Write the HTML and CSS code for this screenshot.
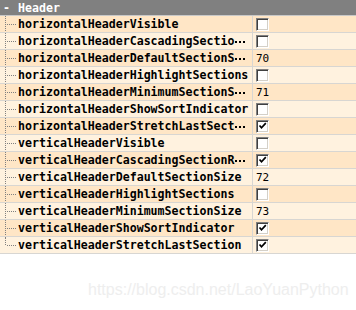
FILE: index.html
```html
<!DOCTYPE html>
<html>
<head>
<meta charset="utf-8">
<link rel="stylesheet" href="styles.css">
</head>
<body>
<div class="table">
  <div class="head"><span class="minus">-</span><span class="htext">Header</span></div>
  <div class="row a"><div class="name"><span class="tree"></span><span class="lbl">horizontalHeaderVisible</span></div><div class="val"><span class="cb"></span></div></div>
  <div class="row b"><div class="name"><span class="tree"></span><span class="lbl">horizontalHeaderCascadingSectio</span><span class="ell" title="…"></span></div><div class="val"><span class="cb"></span></div></div>
  <div class="row a"><div class="name"><span class="tree"></span><span class="lbl">horizontalHeaderDefaultSectionS</span><span class="ell"></span></div><div class="val"><span class="num">70</span></div></div>
  <div class="row b"><div class="name"><span class="tree"></span><span class="lbl">horizontalHeaderHighlightSections</span></div><div class="val"><span class="cb"></span></div></div>
  <div class="row a"><div class="name"><span class="tree"></span><span class="lbl">horizontalHeaderMinimumSectionS</span><span class="ell"></span></div><div class="val"><span class="num">71</span></div></div>
  <div class="row b"><div class="name"><span class="tree"></span><span class="lbl">horizontalHeaderShowSortIndicator</span></div><div class="val"><span class="cb"></span></div></div>
  <div class="row a"><div class="name"><span class="tree"></span><span class="lbl">horizontalHeaderStretchLastSect</span><span class="ell"></span></div><div class="val"><span class="cb on"><svg viewBox="0 0 9 9" width="9" height="9"><path d="M1.5 3.5 L3.5 5.8 L7.8 1.2" fill="none" stroke="#000" stroke-width="1.7"/></svg></span></div></div>
  <div class="row b"><div class="name"><span class="tree"></span><span class="lbl">verticalHeaderVisible</span></div><div class="val"><span class="cb"></span></div></div>
  <div class="row a"><div class="name"><span class="tree"></span><span class="lbl">verticalHeaderCascadingSectionR</span><span class="ell"></span></div><div class="val"><span class="cb on"><svg viewBox="0 0 9 9" width="9" height="9"><path d="M1.5 3.5 L3.5 5.8 L7.8 1.2" fill="none" stroke="#000" stroke-width="1.7"/></svg></span></div></div>
  <div class="row b"><div class="name"><span class="tree"></span><span class="lbl">verticalHeaderDefaultSectionSize</span></div><div class="val"><span class="num">72</span></div></div>
  <div class="row a"><div class="name"><span class="tree"></span><span class="lbl">verticalHeaderHighlightSections</span></div><div class="val"><span class="cb"></span></div></div>
  <div class="row b"><div class="name"><span class="tree"></span><span class="lbl">verticalHeaderMinimumSectionSize</span></div><div class="val"><span class="num">73</span></div></div>
  <div class="row a"><div class="name"><span class="tree"></span><span class="lbl">verticalHeaderShowSortIndicator</span></div><div class="val"><span class="cb on"><svg viewBox="0 0 9 9" width="9" height="9"><path d="M1.5 3.5 L3.5 5.8 L7.8 1.2" fill="none" stroke="#000" stroke-width="1.7"/></svg></span></div></div>
  <div class="row b last"><div class="name"><span class="tree"></span><span class="lbl">verticalHeaderStretchLastSection</span></div><div class="val"><span class="cb on"><svg viewBox="0 0 9 9" width="9" height="9"><path d="M1.5 3.5 L3.5 5.8 L7.8 1.2" fill="none" stroke="#000" stroke-width="1.7"/></svg></span></div></div>
</div>
<div class="mark">https://blog.csdn.net/LaoYuanPython</div>
</body>
</html>
```
FILE: styles.css
```css
html, body {
  margin: 0;
  padding: 0;
  background: #ffffff;
}
body {
  width: 356px;
  height: 310px;
  overflow: hidden;
  position: relative;
}
.table {
  width: 356px;
  display: flex;
  flex-direction: column;
}
.head {
  height: 15px;
  background: #808080;
  border-bottom: 1px solid #c8c8c8;
  display: flex;
  align-items: center;
  color: #ffffff;
  font-family: "DejaVu Sans Mono", monospace;
  font-weight: bold;
  font-size: 11.6px;
}
.minus {
  width: 18px;
  padding-left: 3px;
  box-sizing: border-box;
}
.row {
  height: 16px;
  border-bottom: 1px solid #d8d6d2;
  display: flex;
}
.row.a { background: #ffe6c6; }
.row.b { background: #fff2df; }
.name {
  width: 252px;
  border-right: 1px solid #d8d6d2;
  display: flex;
  align-items: center;
  overflow: hidden;
  white-space: nowrap;
}
.tree {
  width: 18px;
  height: 17px;
  align-self: flex-start;
  position: relative;
  flex: none;
}
.tree::before {
  content: "";
  position: absolute;
  left: 5px;
  top: 0;
  height: 17px;
  border-left: 1px dotted #808080;
}
.row.last .tree::before {
  height: 8px;
}
.tree::after {
  content: "";
  position: absolute;
  left: 7px;
  top: 8px;
  width: 9px;
  border-top: 1px dotted #808080;
}
.lbl {
  font-family: "DejaVu Sans Mono", monospace;
  font-weight: bold;
  font-size: 11.6px;
  color: #000;
  line-height: 16px;
}
.ell {
  flex: none;
  width: 10px;
  height: 2px;
  margin-left: 1px;
  margin-top: 2px;
  background-image: linear-gradient(to right, #000 2px, transparent 2px);
  background-size: 4px 2px;
  background-repeat: repeat-x;
}
.val {
  flex: 1;
  display: flex;
  align-items: center;
  padding-left: 3px;
}
.num {
  font-family: "DejaVu Sans Mono", monospace;
  font-size: 11px;
  color: #000;
}
.cb {
  width: 13px;
  height: 13px;
  box-sizing: border-box;
  background: #fff;
  border-top: 1px solid #808080;
  border-left: 1px solid #808080;
  border-right: 1px solid #ffffff;
  border-bottom: 1px solid #ffffff;
  box-shadow: inset 1px 1px 0 #404040, inset -1px -1px 0 #d4d0c8;
  display: flex;
  align-items: center;
  justify-content: center;
}
.cb svg { display: block; }
.mark {
  position: absolute;
  left: 88px;
  top: 281px;
  font-family: "Liberation Sans", Arial, sans-serif;
  font-size: 16px;
  color: #eeeeee;
  white-space: nowrap;
}
```
